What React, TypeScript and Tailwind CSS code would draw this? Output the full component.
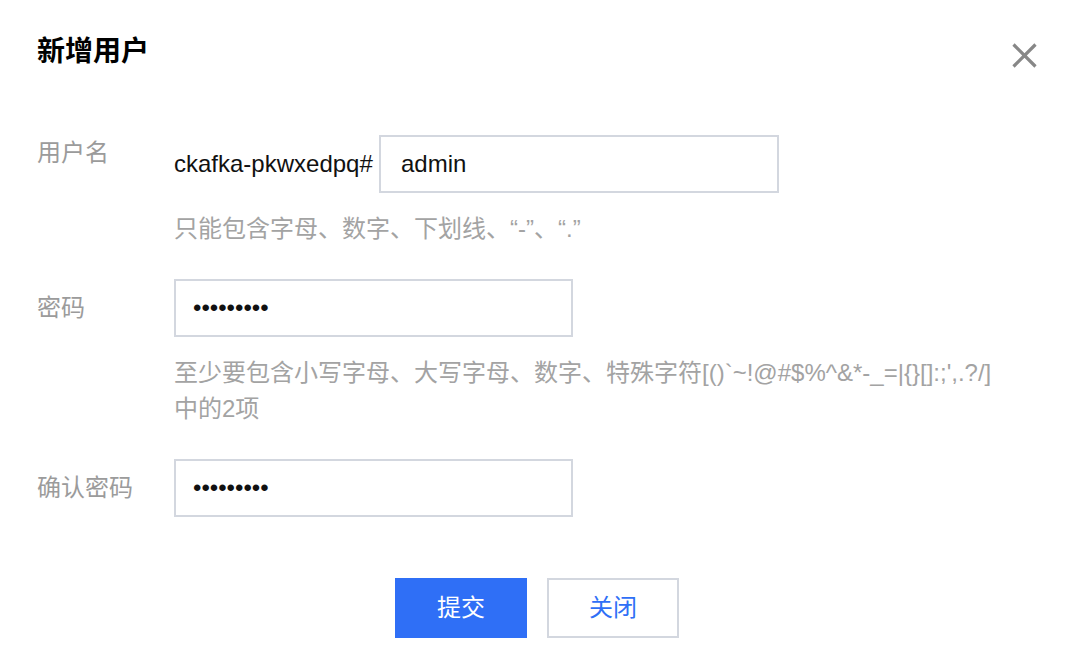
import { FC, ReactNode } from "react";

const font = { fontFamily: '"Liberation Sans", "Noto Sans CJK SC", sans-serif' };

const Row: FC<{ label: string; top?: boolean; children: ReactNode }> = ({ label, top, children }) => (
  <div className={top ? "flex items-start" : "flex items-center"}>
    <div className="w-[137px] shrink-0 text-[24px] leading-[36px] text-[#9b9b9b]">{label}</div>
    {children}
  </div>
);

const Hint: FC<{ children: ReactNode }> = ({ children }) => (
  <p className="mt-[18px] pl-[137px] text-[24px] leading-[36px] text-[#a3a3a3] whitespace-nowrap">{children}</p>
);

const Dots = () => (
  <div className="w-[399px] h-[58px] border-2 border-[#d3d7df] flex items-center pl-[17px] text-[24px] text-[#111]">
    •••••••••
  </div>
);

export default function App() {
  return (
    <div className="w-[1066px] h-[662px] bg-white overflow-hidden" style={font}>
      <div className="flex justify-between items-start pt-[32px] pl-[37px] pr-[29px]">
        <h1 className="text-[28px] leading-[40px] font-bold text-black">新增用户</h1>
        <svg width="25" height="25" viewBox="0 0 25 25" className="mt-[11px]">
          <path d="M1.5 1.5L23.5 23.5M23.5 1.5L1.5 23.5" stroke="#878787" strokeWidth="3.2" />
        </svg>
      </div>

      <div className="pl-[37px] mt-[63px]">
        <Row label="用户名" top>
          <div className="flex items-center">
            <span className="w-[205px] text-[24px] text-[#111]">ckafka-pkwxedpq#</span>
            <div className="w-[400px] h-[58px] border-2 border-[#d3d7df] flex items-center pl-[20px] text-[24px] text-[#111]">
              admin
            </div>
          </div>
        </Row>
        <Hint>只能包含字母、数字、下划线、“-”、“.”</Hint>

        <div className="mt-[32px]">
          <Row label="密码">
            <Dots />
          </Row>
        </div>
        <Hint>
          至少要包含小写字母、大写字母、数字、特殊字符[()`~!@#$%^&*-_=|{"{}"}[]:;',.?/]
          <br />
          中的2项
        </Hint>

        <div className="mt-[32px]">
          <Row label="确认密码">
            <Dots />
          </Row>
        </div>
      </div>

      <div className="flex justify-center gap-[20px] mt-[61px] pl-[8px]">
        <button className="w-[132px] h-[60px] bg-[#2f6ff6] text-white text-[24px]">提交</button>
        <button className="w-[132px] h-[60px] border-2 border-[#d3d7df] bg-white text-[#2f6ff6] text-[24px]">关闭</button>
      </div>
    </div>
  );
}
